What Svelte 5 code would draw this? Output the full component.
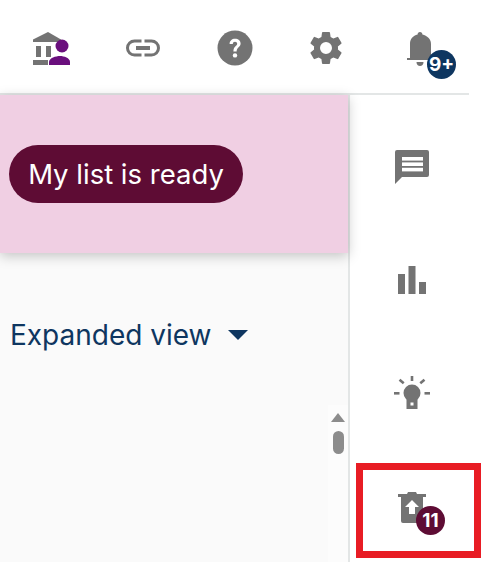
<script>
  const badgeNotifications = "9+";
  const badgeList = 11;
</script>

<div class="page">
  <header class="topbar">
    <button class="top-icon" aria-label="Institution">
      <svg width="40" height="40" viewBox="0 0 40 40">
        <path d="M17 4 L30 11.5 V14 H2 V11.5 Z" fill="#737373" />
        <rect x="5" y="18" width="5" height="11" fill="#737373" />
        <rect x="15" y="18" width="5" height="11" fill="#737373" />
        <rect x="2" y="32" width="15" height="5" fill="#737373" />
        <circle cx="31" cy="18" r="6.5" fill="#6a0f7d" />
        <path d="M18 37 V34 C18 30 25 28 29 28 C33 28 39 30 39 34 V37 Z" fill="#6a0f7d" />
      </svg>
    </button>
    <button class="top-icon" aria-label="Link">
      <svg width="36" height="36" viewBox="0 0 36 36">
        <path d="M16.5 11 H9.5 a7 7 0 0 0 0 14 H16.5 M19.5 11 H26.5 a7 7 0 0 1 0 14 H19.5" fill="none" stroke="#737373" stroke-width="3" />
        <rect x="11" y="16" width="14" height="4" fill="#737373" />
      </svg>
    </button>
    <button class="top-icon" aria-label="Help">
      <svg width="36" height="36" viewBox="0 0 36 36">
        <circle cx="18" cy="18" r="17.5" fill="#737373" />
        <path d="M12.6 14 C12.6 10.8 15 8.8 18 8.8 C21.2 8.8 23.6 10.8 23.6 13.6 C23.6 17.2 19.6 17.4 19.6 21.4 H16.4 C16.4 16.2 20.2 16.2 20.2 13.8 C20.2 12.6 19.2 11.8 18 11.8 C16.8 11.8 15.8 12.6 15.8 14 Z" fill="#fff" />
        <circle cx="18" cy="25.4" r="2.2" fill="#fff" />
      </svg>
    </button>
    <button class="top-icon" aria-label="Settings">
      <svg width="40" height="40" viewBox="0 0 24 24">
        <path fill="#737373" d="M19.14 12.94c.04-.3.06-.61.06-.94s-.02-.64-.07-.94l2.03-1.58a.49.49 0 0 0 .12-.61l-1.92-3.32a.49.49 0 0 0-.59-.22l-2.39.96a7 7 0 0 0-1.62-.94l-.36-2.54a.48.48 0 0 0-.48-.41h-3.84a.48.48 0 0 0-.47.41l-.36 2.54c-.59.24-1.13.57-1.62.94l-2.39-.96a.49.49 0 0 0-.59.22L2.74 8.87a.48.48 0 0 0 .12.61l2.03 1.58c-.05.3-.09.63-.09.94s.02.64.07.94l-2.03 1.58a.49.49 0 0 0-.12.61l1.92 3.32c.12.22.37.29.59.22l2.39-.96c.5.38 1.03.7 1.62.94l.36 2.54c.05.24.24.41.48.41h3.84c.24 0 .44-.17.47-.41l.36-2.54c.59-.24 1.13-.56 1.62-.94l2.39.96c.22.08.47 0 .59-.22l1.92-3.32a.48.48 0 0 0-.12-.61zM12 15.6A3.6 3.6 0 1 1 12 8.4a3.6 3.6 0 0 1 0 7.2z" />
      </svg>
    </button>
    <button class="top-icon" aria-label="Notifications">
      <svg width="36" height="36" viewBox="0 0 36 36">
        <path d="M20 2 C21.5 2 22.4 3 22.4 4.6 C27 5.8 31 9 31 14 V28 H32 V30 H7 V28 H10 V14 C10 9 13 5.8 17.6 4.6 C17.6 3 18.5 2 20 2 Z" fill="#737373" />
        <path d="M16.5 32 H23.5 C23.5 34.5 22 36 20 36 C18 36 16.5 34.5 16.5 32 Z" fill="#737373" />
      </svg>
      <span class="badge badge-navy">{badgeNotifications}</span>
    </button>
  </header>

  <div class="body">
    <main class="content">
      <section class="banner">
        <button class="ready-btn">My list is ready</button>
      </section>
      <div class="view-toggle">
        <span>Expanded view</span>
        <svg width="20" height="10" viewBox="0 0 20 10">
          <path d="M0 0 H20 L10 10 Z" fill="#0e3660" />
        </svg>
      </div>
      <div class="scrollbar">
        <div class="scroll-arrow"></div>
        <div class="scroll-thumb"></div>
      </div>
    </main>

    <aside class="rail">
      <button class="rail-item" aria-label="Comments">
        <svg width="36" height="36" viewBox="0 0 36 36">
          <path d="M3 1 H33 a2 2 0 0 1 2 2 V26 a2 2 0 0 1 -2 2 H8 L1 35 V3 a2 2 0 0 1 2 -2 Z" fill="#737373" />
          <rect x="8" y="8" width="21" height="3.6" fill="#fff" />
          <rect x="8" y="13.4" width="21" height="3.6" fill="#fff" />
          <rect x="8" y="18.8" width="21" height="3.6" fill="#fff" />
        </svg>
      </button>
      <button class="rail-item" aria-label="Statistics">
        <svg width="30" height="30" viewBox="0 0 30 30">
          <rect x="1" y="9" width="7" height="20" fill="#737373" />
          <rect x="11.5" y="1" width="7" height="28" fill="#737373" />
          <rect x="22" y="17" width="7" height="12" fill="#737373" />
        </svg>
      </button>
      <button class="rail-item" aria-label="Ideas">
        <svg width="36" height="34" viewBox="0 0 36 34">
          <rect x="16.7" y="0" width="2.6" height="5" fill="#737373" />
          <rect x="5" y="4.5" width="5.5" height="2.6" transform="rotate(40 8 5.5)" fill="#737373" />
          <rect x="25.5" y="4.5" width="5.5" height="2.6" transform="rotate(-40 28 5.5)" fill="#737373" />
          <rect x="0" y="16" width="5.5" height="2.6" fill="#737373" />
          <rect x="30.5" y="16" width="5.5" height="2.6" fill="#737373" />
          <circle cx="18" cy="17" r="8.5" fill="#737373" />
          <rect x="12.5" y="22" width="11" height="11" fill="#737373" />
          <rect x="16.5" y="26.5" width="3" height="3" fill="#fff" />
        </svg>
      </button>
      <div class="list-highlight">
        <button class="rail-item" aria-label="My list">
          <svg width="30" height="32" viewBox="0 0 30 32">
            <path d="M1 3 H10 L11 1 H19 L20 3 H29 V6 H26 V30 a2 2 0 0 1 -2 2 H6 a2 2 0 0 1 -2 -2 V6 H1 Z" fill="#737373" />
            <path d="M15 9 L22 16 H18 V23 H12 V16 H8 Z" fill="#fff" />
          </svg>
          <span class="badge badge-wine">{badgeList}</span>
        </button>
      </div>
    </aside>
  </div>
</div>

<style>
  :global(body) {
    margin: 0;
    background: #fff;
  }

  .page {
    width: 482px;
    height: 562px;
    overflow: hidden;
    display: flex;
    flex-direction: column;
    font-family: Inter, "Noto Sans", sans-serif;
  }

  button {
    background: none;
    border: none;
    padding: 0;
    font: inherit;
    color: inherit;
  }

  .topbar {
    width: 469px;
    height: 95px;
    flex-shrink: 0;
    box-sizing: border-box;
    border-bottom: 2px solid #e3e6e6;
    padding: 3px 31px 0 31px;
    display: flex;
    justify-content: space-between;
    align-items: center;
  }

  .top-icon {
    position: relative;
    width: 40px;
    height: 40px;
    display: flex;
    align-items: center;
    justify-content: center;
  }

  .badge {
    position: absolute;
    border-radius: 50%;
    width: 29px;
    height: 29px;
    display: flex;
    align-items: center;
    justify-content: center;
    color: #fff;
    font-weight: 700;
    font-size: 19px;
  }

  .badge-navy {
    background: #0e3660;
    right: -18px;
    bottom: -11px;
  }

  .badge-wine {
    background: #5e0c34;
  }

  .body {
    flex: 1;
    display: flex;
    min-height: 0;
  }

  .content {
    position: relative;
    width: 348px;
    background: #fafafa;
    display: flex;
    flex-direction: column;
    align-items: flex-start;
  }

  .banner {
    width: 100%;
    height: 158px;
    box-sizing: border-box;
    background: #f0cfe3;
    box-shadow: 0 3px 12px rgba(0, 0, 0, 0.22);
    padding: 50px 0 0 9px;
  }

  .ready-btn {
    height: 58px;
    width: 234px;
    border-radius: 29px;
    background: #5e0c34;
    color: #fff;
    font-size: 27.5px;
    text-align: center;
  }

  .view-toggle {
    margin: 66px 0 0 10px;
    display: flex;
    align-items: center;
    gap: 16px;
    color: #0e3660;
    font-size: 28px;
    line-height: 32px;
  }

  .scrollbar {
    position: absolute;
    top: 310px;
    right: 0;
    bottom: 0;
    width: 20px;
    background: #fcfcfc;
    display: flex;
    flex-direction: column;
    align-items: center;
    padding-top: 8px;
    box-sizing: border-box;
  }

  .scroll-arrow {
    width: 0;
    height: 0;
    border-left: 7px solid transparent;
    border-right: 7px solid transparent;
    border-bottom: 9px solid #8c8c8c;
  }

  .scroll-thumb {
    width: 11px;
    height: 23px;
    margin-top: 9px;
    border-radius: 6px;
    background: #8c8c8c;
  }

  .rail {
    flex: 1;
    border-left: 2px solid #e3e6e6;
    display: flex;
    flex-direction: column;
    align-items: flex-start;
  }

  .rail-item {
    position: relative;
    display: flex;
    align-items: center;
    justify-content: center;
    width: 60px;
    height: 40px;
    margin-left: 32px;
    margin-top: 52px;
    flex-shrink: 0;
  }

  .rail-item + .rail-item {
    margin-top: 73px;
  }

  .rail-item .badge {
    right: -3px;
    bottom: -8px;
  }

  .list-highlight {
    width: 125px;
    height: 95px;
    flex-shrink: 0;
    box-sizing: border-box;
    border: 7px solid #e81c24;
    margin: 50px 0 0 6px;
    padding: 0 0 7px 19px;
    display: flex;
    align-items: center;
  }

  .list-highlight .rail-item {
    margin: 0;
  }
</style>
